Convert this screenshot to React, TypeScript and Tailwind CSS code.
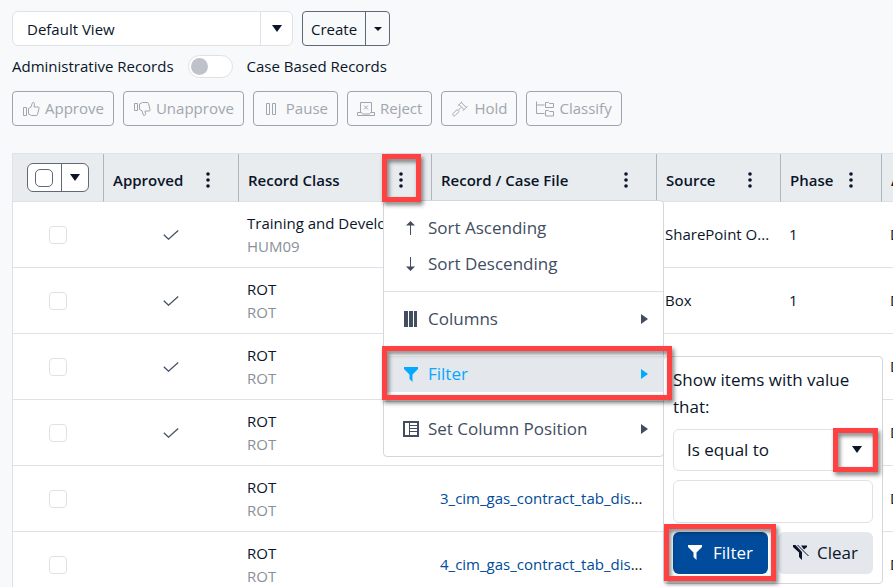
import React, { useState } from 'react';

interface RecordRow {
  id: number;
  approved: boolean;
  recordClass: string;
  code: string;
  file?: string;
  source?: string;
  phase?: string;
  action: string;
}

const rows: RecordRow[] = [
  { id: 1, approved: true, recordClass: 'Training and Development', code: 'HUM09', source: 'SharePoint O...', phase: '1', action: 'D' },
  { id: 2, approved: true, recordClass: 'ROT', code: 'ROT', source: 'Box', phase: '1', action: 'D' },
  { id: 3, approved: true, recordClass: 'ROT', code: 'ROT', action: 'D' },
  { id: 4, approved: true, recordClass: 'ROT', code: 'ROT', action: 'D' },
  { id: 5, approved: false, recordClass: 'ROT', code: 'ROT', file: '3_cim_gas_contract_tab_dis', action: 'D' },
  { id: 6, approved: false, recordClass: 'ROT', code: 'ROT', file: '4_cim_gas_contract_tab_dis', action: 'D' },
];

const actions = [
  {
    label: 'Approve',
    icon: (
      <>
        <path d="M1.5 6.5h3v8h-3z" />
        <path d="M6.5 7.5 9 6.2l1.4-4.4c.2-.7 2.3-.3 2.1 1.3L12 6h4.2c.8 0 1 .6.8 1.3l-1.4 6c-.2.8-.6 1.2-1.4 1.2H9.5l-3-1.5z" />
      </>
    ),
  },
  {
    label: 'Unapprove',
    icon: (
      <>
        <path d="M1.5 2.5h3v7h-3z" />
        <path d="M6.5 8.5 9 9.8l1.4 4.4c.2.7 2.3.3 2.1-1.3L12 10h4.2c.8 0 1-.6.8-1.3l-1.4-6c-.2-.8-.6-1.2-1.4-1.2H9.5l-3 1.5z" />
      </>
    ),
  },
  {
    label: 'Pause',
    icon: <path d="M3.5 2.5h3v11h-3zM9.5 2.5h3v11h-3z" />,
  },
  {
    label: 'Reject',
    icon: (
      <>
        <path d="M3.5 11.5v-10h11v10" />
        <path d="M.5 11.5h4l1 1.5h7l1-1.5h4v3H.5zM7 4.5l4 4M11 4.5l-4 4" />
      </>
    ),
  },
  {
    label: 'Hold',
    icon: (
      <>
        <path d="m8 3.6 5 5M10.2 1.4l5 5" />
        <path d="M6.8 4.8 11.3.5M11.8 9.8l4.6-4.6M9.8 6.6 7.5 9" />
        <path d="m6 8.6 2 2-4 4c-1.200 1.200-3.200-.8-2-2z" />
      </>
    ),
  },
  {
    label: 'Classify',
    icon: (
      <>
        <path d="M.5.5v12h8M.5 4h8" />
        <path d="M9.5 1.5h3l1 1h4v4h-8zM9.5 9.5h3l1 1h4V15h-8z" />
      </>
    ),
  },
];

const Caret = ({ className = '' }: { className?: string }) => (
  <svg viewBox="0 0 10 7" className={`h-[7px] w-[10px] ${className}`} fill="currentColor" aria-hidden="true">
    <path d="M0 0h10L5 7z" />
  </svg>
);

const RightCaret = () => (
  <svg viewBox="0 0 7 10" className="ml-auto h-[10px] w-[7px]" fill="currentColor" aria-hidden="true">
    <path d="M0 0v10l7-5z" />
  </svg>
);

const Funnel = ({ className = '' }: { className?: string }) => (
  <svg viewBox="0 0 14 15" className={`h-[15px] w-[14px] ${className}`} fill="currentColor" aria-hidden="true">
    <path d="M0 0h14v2L8.5 7.5V15l-3-3V7.5L0 2z" />
  </svg>
);

// Red outline used to call out a control
const Callout = ({ className }: { className: string }) => (
  <span
    aria-hidden="true"
    className={`pointer-events-none absolute z-30 border-[5px] border-[#ff4141] drop-shadow-[2px_3px_2px_rgba(0,0,0,0.5)] ${className}`}
  />
);

const HeaderCell = ({ label, children }: { label: string; children?: React.ReactNode }) => (
  <th className="relative h-12 border-b border-l border-b-[#dee2e6] border-l-[#adb5bd] pt-[5px] pr-[21px] pl-[9px] text-left font-semibold">
    <div className="flex items-center justify-between">
      <span className="whitespace-nowrap">{label}</span>
      <button type="button" aria-label={`${label} column menu`} className="flex w-[18px] justify-center">
        <svg viewBox="0 0 4 16" className="h-4 w-1" fill="currentColor" aria-hidden="true">
          <circle cx="2" cy="2" r="1.8" />
          <circle cx="2" cy="8" r="1.8" />
          <circle cx="2" cy="14" r="1.8" />
        </svg>
      </button>
    </div>
    {children}
  </th>
);

const itemClass = 'flex h-9 w-full items-center gap-[10px] pr-[15px] pl-[19px] text-left';

const FilterPanel = () => {
  const [operator, setOperator] = useState('eq');
  const [value, setValue] = useState('');

  return (
    <form
      onSubmit={(e) => e.preventDefault()}
      className="absolute top-0 left-full z-20 flex w-[220px] flex-col gap-[9px] rounded border border-[#d3d7dc] bg-white p-[9px] text-[17px] leading-[27px] text-[#0a1529]"
    >
      <label htmlFor="operator">Show items with value that:</label>
      <div className="relative">
        <select
          id="operator"
          value={operator}
          onChange={(e) => setOperator(e.target.value)}
          className="block h-[42px] w-full appearance-none rounded-md border border-[#dee2e6] bg-white pr-10 pb-[2px] pl-[13px]"
        >
          <option value="eq">Is equal to</option>
          <option value="neq">Is not equal to</option>
        </select>
        <Caret className="pointer-events-none absolute top-[17px] right-[11px]" />
        <Callout className="-top-px -right-[5px] h-11 w-[45px]" />
      </div>
      <input
        type="text"
        aria-label="Filter value"
        value={value}
        onChange={(e) => setValue(e.target.value)}
        className="h-[43px] w-full rounded-md border border-[#dee2e6] bg-white px-3"
      />
      <div className="flex gap-[10px]">
        <div className="relative flex-1">
          <button type="submit" className="flex h-[42px] w-full items-center justify-center gap-[11px] rounded-md bg-[#004b9b] pb-[2px] text-white">
            <Funnel />
            Filter
          </button>
          <Callout className="-top-2 -left-[9px] h-[57px] w-28" />
        </div>
        <button type="button" className="flex h-[42px] flex-1 items-center justify-center gap-2 rounded-md bg-[#e4e7eb] pb-[2px]">
          <svg viewBox="0 0 16 16" className="h-4 w-4" fill="currentColor" aria-hidden="true">
            <path d="M0 1h2.5L9 8v8l-3-3V8.500L0 3z" />
            <path d="M8 1.500h6V3l-3 2.500z" />
            <path d="m4.500 1 11 11" fill="none" stroke="currentColor" />
          </svg>
          Clear
        </button>
      </div>
    </form>
  );
};

const ColumnMenu = () => (
  <div className="absolute top-full left-36 z-10 -mt-px w-[281px] rounded border border-[#d3d7dc] bg-white text-[17px] font-normal text-[#424d5f]">
    <div className="border-b border-[#dee2e6] py-[9px]">
      <button type="button" className={itemClass}>
        <svg viewBox="0 0 15 14" className="h-[14px] w-[15px]" fill="currentColor" aria-hidden="true">
          <path d="M7.500 0 12 4.500H8V14H7V4.500H3z" />
        </svg>
        Sort Ascending
      </button>
      <button type="button" className={itemClass}>
        <svg viewBox="0 0 15 14" className="h-[14px] w-[15px]" fill="currentColor" aria-hidden="true">
          <path d="M7.500 14 12 9.500H8V0H7v9.500H3z" />
        </svg>
        Sort Descending
      </button>
    </div>
    <div className="border-b border-[#dee2e6] py-[9px]">
      <button type="button" className={itemClass}>
        <svg viewBox="0 0 15 16" className="h-4 w-[15px]" fill="currentColor" aria-hidden="true">
          <path d="M1 0h4v16H1zM6 0h4v16H6zM11 0h3v16h-3z" />
        </svg>
        Columns
        <RightCaret />
      </button>
    </div>
    <div className="border-b border-[#dee2e6] py-[9px]">
      <div className="relative">
        <button type="button" className={`${itemClass} bg-[#e4e7eb] text-[#03a9ff]`}>
          <Funnel className="ml-px" />
          Filter
          <RightCaret />
        </button>
        <Callout className="-top-[10px] -left-[2px] h-[54px] w-[290px]" />
        <FilterPanel />
      </div>
    </div>
    <div className="py-[9px]">
      <button type="button" className={itemClass}>
        <svg viewBox="0 0 16 16" className="-mr-px h-4 w-4" fill="none" stroke="currentColor" aria-hidden="true">
          <path d="M1 1h14v14H1z" strokeWidth="2" />
          <path d="M6.5 1v14M6 4.5h9M6 7.500h9M6 10.500h9" />
        </svg>
        Set Column Position
        <RightCaret />
      </button>
    </div>
  </div>
);

const App: React.FC = () => {
  const [view, setView] = useState('default');
  const [caseBased, setCaseBased] = useState(false);

  return (
    <div className="h-screen overflow-hidden bg-[#f8f9fb] pt-[11px] pl-3 font-['Open_Sans','Noto_Sans',sans-serif] text-[15px] text-[#0a1529]">
      {/* View selector */}
      <div className="flex gap-[9px]">
        <div className="relative w-[281px]">
          <select
            aria-label="View"
            value={view}
            onChange={(e) => setView(e.target.value)}
            className="block h-[35px] w-full appearance-none rounded-md border border-[#dee2e6] bg-white pt-[2px] pr-9 pl-[14px]"
          >
            <option value="default">Default View</option>
          </select>
          <span className="pointer-events-none absolute inset-y-px right-px flex w-8 items-center justify-center border-l border-[#dee2e6]">
            <Caret />
          </span>
        </div>
        <div className="flex h-[35px] rounded border border-[#5f6977]">
          <button type="button" className="px-2 pt-[2px]">Create</button>
          <button type="button" aria-label="More create options" className="flex w-6 items-center justify-center border-l border-[#5f6977]">
            <svg viewBox="0 0 8 4" className="h-1 w-2" fill="currentColor" aria-hidden="true">
              <path d="M0 0h8L4 4z" />
            </svg>
          </button>
        </div>
      </div>

      {/* Record type toggle */}
      <label className="mt-2 flex h-6 items-center">
        <span>Administrative Records</span>
        <input
          type="checkbox"
          role="switch"
          checked={caseBased}
          onChange={(e) => setCaseBased(e.target.checked)}
          className="relative mx-[14px] h-[23px] w-[45px] appearance-none rounded-full border border-[#dee2e6] bg-white before:absolute before:top-[2px] before:left-[2px] before:h-[17px] before:w-[17px] before:rounded-full before:bg-[#bfc2cb] checked:before:left-6"
        />
        <span>Case Based Records</span>
      </label>

      {/* Bulk actions */}
      <div className="mt-[13px] flex gap-[9px]">
        {actions.map((action) => (
          <button
            key={action.label}
            type="button"
            disabled
            className="flex h-[35px] items-center gap-[5px] rounded border border-[#9da4ad] px-[9px] text-[#a0a6ae]"
          >
            <svg viewBox="0 0 18 16" className="h-4 w-[18px]" fill="none" stroke="currentColor" aria-hidden="true">
              {action.icon}
            </svg>
            {action.label}
          </button>
        ))}
      </div>

      {/* Records grid */}
      <div className="mt-[27px] border-t border-l border-[#dee2e6] bg-white">
        <table className="w-[980px] table-fixed border-separate border-spacing-0">
          <colgroup>
            <col className="w-[90px]" />
            <col className="w-[135px]" />
            <col className="w-[193px]" />
            <col className="w-[225px]" />
            <col className="w-[124px]" />
            <col className="w-[101px]" />
            <col />
          </colgroup>
          <thead className="bg-[#e8ecef]">
            <tr>
              <th className="h-12 border-b border-[#dee2e6] pl-[14px]">
                <div className="flex h-[29px] w-[62px] rounded-md border border-[#5f6977] bg-white">
                  <span className="flex flex-1 items-center justify-center pr-px">
                    <input type="checkbox" aria-label="Select all" className="h-[18px] w-[18px] appearance-none rounded-[5px] border border-[#5f6977] bg-white" />
                  </span>
                  <button type="button" aria-label="Selection options" className="flex w-[27px] items-center justify-center border-l border-[#5f6977]">
                    <Caret />
                  </button>
                </div>
              </th>
              <HeaderCell label="Approved" />
              <HeaderCell label="Record Class">
                <Callout className="top-0 left-[143px] h-12 w-[39px]" />
                <ColumnMenu />
              </HeaderCell>
              <HeaderCell label="Record / Case File" />
              <HeaderCell label="Source" />
              <HeaderCell label="Phase" />
              <HeaderCell label="A" />
            </tr>
          </thead>
          <tbody className="[&_td]:h-[66px] [&_td]:border-b [&_td]:border-[#dee2e6] [&_td]:px-[9px] [&_td]:py-0">
            {rows.map((row) => (
              <tr key={row.id}>
                <td>
                  <input
                    type="checkbox"
                    aria-label={`Select row ${row.id}`}
                    className="mx-auto block h-[18px] w-[18px] appearance-none rounded border border-[#dee2e6] bg-white"
                  />
                </td>
                <td>
                  {row.approved && (
                    <svg viewBox="0 0 16 10" className="mx-auto h-[10px] w-4" fill="none" stroke="#475266" strokeWidth="1.3" aria-label="Approved">
                      <path d="M.8 4.8 5.500 9.200 15.200.5" />
                    </svg>
                  )}
                </td>
                <td className="whitespace-nowrap">
                  <div>{row.recordClass}</div>
                  <div className="text-[#8a9099]">{row.code}</div>
                </td>
                <td className="whitespace-nowrap">
                  {row.file && (
                    <>
                      <a href="#" className="text-[#004b9b]">{row.file}</a>...
                    </>
                  )}
                </td>
                <td className="whitespace-nowrap">{row.source}</td>
                <td>{row.phase}</td>
                <td>{row.action}</td>
              </tr>
            ))}
          </tbody>
        </table>
      </div>
    </div>
  );
};

export default App;
